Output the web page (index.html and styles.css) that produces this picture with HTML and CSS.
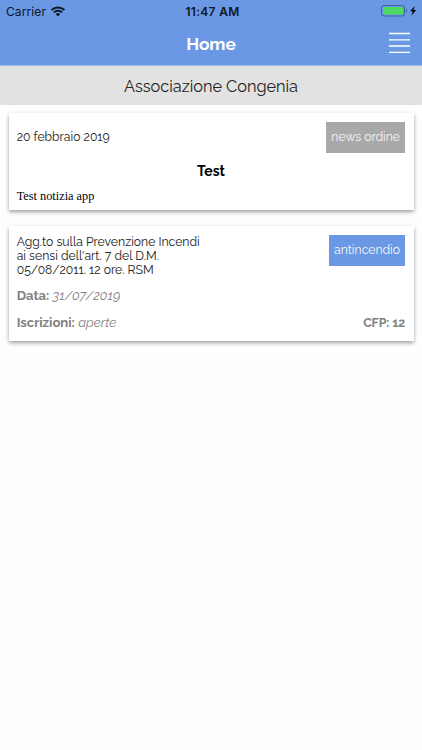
FILE: index.html
```html
<!DOCTYPE html>
<html lang="it">
<head>
  <meta charset="UTF-8">
  <meta name="viewport" content="width=device-width, initial-scale=1.0">
  <title>Home</title>
  <link rel="stylesheet" href="styles.css">
</head>
<body>
  <header class="header">
    <div class="status">
      <div class="carrier">
        <span>Carrier</span>
        <svg class="wifi" width="14" height="11" viewBox="0 0 14 11">
          <path d="M.6 4a9.2 9.2 0 0 1 12.8 0M2.9 6.4a5.9 5.9 0 0 1 8.2 0" fill="none" stroke="#0d1526" stroke-width="2"/>
          <path d="M4.7 8.1a3.3 3.3 0 0 1 4.6 0L7 10.5z" fill="#0d1526"/>
        </svg>
      </div>
      <div class="time">11:47 AM</div>
      <div class="power">
        <svg width="37" height="12" viewBox="0 0 37 12">
          <rect x=".5" y=".5" width="23" height="10.5" rx="2.6" fill="none" stroke="#40619a"/>
          <rect x="2" y="2" width="20" height="7.5" rx="1.3" fill="#4cd964"/>
          <path d="M25 4v3.5q1-.4 1-1.75T25 4z" fill="#40619a"/>
          <path d="M33.6 1L29.2 6.3h2.4L30.5 10.6L35.2 5.1h-2.6z" fill="#05080d"/>
        </svg>
      </div>
    </div>
    <div class="navbar">
      <h1>Home</h1>
      <svg class="menu" width="21" height="22" viewBox="0 0 21 22">
        <path d="M0 1.5h21M0 7.8h21M0 14h21M0 20.3h21" stroke="#fff" stroke-width="1.3"/>
      </svg>
    </div>
  </header>

  <div class="subtitle">Associazione Congenia</div>

  <main class="list">
    <div class="card news">
      <div class="top">
        <div class="date">20 febbraio 2019</div>
        <div class="badge grey">news ordine</div>
      </div>
      <h2>Test</h2>
      <p class="body">Test notizia app</p>
    </div>

    <div class="card course">
      <div class="top">
        <div class="name">Agg.to sulla Prevenzione Incendi<br>ai sensi dell'art. 7 del D.M.<br>05/08/2011. 12 ore. RSM</div>
        <div class="badge blue">antincendio</div>
      </div>
      <div class="row"><div><strong>Data:</strong> <em>31/07/2019</em></div></div>
      <div class="row">
        <div><strong>Iscrizioni:</strong> <em>aperte</em></div>
        <div class="cfp">CFP: 12</div>
      </div>
    </div>
  </main>
</body>
</html>
```

FILE: styles.css
```css
* {
  box-sizing: border-box;
}

body {
  margin: 0;
  min-height: 100vh;
  background: #fefefe;
  color: #222;
  font-family: Raleway, Lato, sans-serif;
  font-size: 12.2px;
}

.header {
  height: 66px;
  background: #6a98e4;
  border-bottom: 1px solid #a3bdea;
}

.status {
  display: grid;
  grid-template-columns: 1fr auto 1fr;
  align-items: center;
  height: 22px;
  padding: 0 4px 0 6px;
  font-family: Inter, sans-serif;
  font-size: 12px;
  color: #0d1526;
}

.carrier {
  display: flex;
  align-items: center;
  gap: 5px;
  letter-spacing: 0.1px;
}

.time {
  padding-left: 1px;
  font-weight: 600;
  letter-spacing: 0.3px;
}

.power {
  display: flex;
  justify-content: flex-end;
}

.navbar {
  display: grid;
  grid-template-columns: 1fr auto 1fr;
  align-items: center;
  height: 43px;
  padding: 0 12px;
}

.navbar h1 {
  grid-column: 2;
  margin: 0;
  font-size: 17.3px;
  line-height: 22px;
  color: #fff;
}

.menu {
  justify-self: end;
  margin-top: -2px;
}

.subtitle {
  height: 39px;
  background: #e2e2e2;
  font-size: 16.3px;
  line-height: 41px;
  text-align: center;
}

.list {
  display: flex;
  flex-direction: column;
  gap: 16px;
  padding: 8px 8.5px;
}

.card {
  padding: 8.5px 8.2px 0;
  background: #fff;
  box-shadow: 0 2px 4px rgba(0, 0, 0, 0.38);
}

.news {
  height: 97px;
}

.course {
  height: 115px;
}

.top {
  display: flex;
  justify-content: space-between;
  align-items: flex-start;
}

.date {
  line-height: 31px;
}

.badge {
  height: 31px;
  padding: 0 5.3px;
  line-height: 31px;
  color: #f6f6f6;
}

.grey {
  background: #a9a9a9;
}

.blue {
  background: #6a98e4;
}

.news h2 {
  margin: 9px 0 8px;
  font-size: 14px;
  line-height: 18px;
  text-align: center;
  color: #000;
}

.news .body {
  margin: 0;
  font-family: "Liberation Serif", serif;
  font-size: 12.3px;
  line-height: 16px;
  color: #000;
}

.name {
  line-height: 14.4px;
}

.row {
  display: flex;
  justify-content: space-between;
  margin-top: 9px;
  font-size: 13.1px;
  line-height: 18px;
  color: #808080;
}

.cfp {
  font-size: 12.3px;
  font-weight: bold;
}
```
